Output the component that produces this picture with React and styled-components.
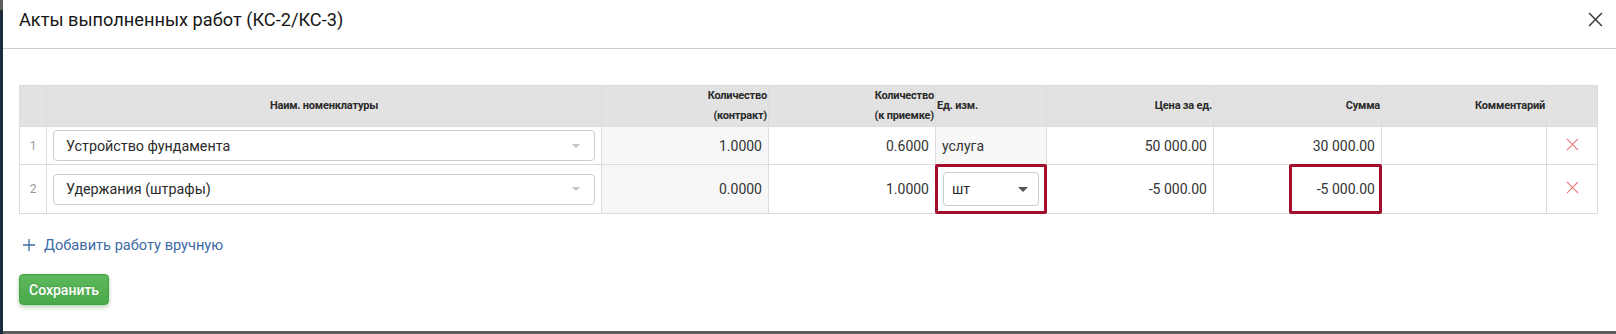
import React from 'react'
import styled, { createGlobalStyle } from 'styled-components'

const GlobalStyle = createGlobalStyle`
  html, body {
    margin: 0;
    padding: 0;
    background: #5d5d5d;
    overflow: hidden;
  }
`

const colors = {
  border: '#dcdcdc',
  headBg: '#e2e2e2',
  text: '#333333',
  readonly: '#f7f7f7',
  highlight: '#a50d2d',
  link: '#3d6aa5',
  remove: '#e37272',
}

const Page = styled.div`
  display: flex;
  width: 1616px;
  height: 334px;
  background: #5d5d5d;
`

const SideStrip = styled.div`
  width: 3px;
  height: 331px;
  margin-top: 10px;
  background: #1d2c3c;
`

const Modal = styled.div`
  flex: 1;
  height: 331px;
  background: #ffffff;
  display: flex;
  flex-direction: column;
  font-family: Roboto, 'Liberation Sans', sans-serif;
  color: ${colors.text};
`

const ModalHeader = styled.div`
  height: 48px;
  display: flex;
  align-items: center;
  justify-content: space-between;
  padding: 0 12px 0 16px;
  border-bottom: 1px solid #cfcfcf;
`

const Title = styled.h2`
  margin: 0;
  font-size: 18.2px;
  font-weight: 400;
  color: #161616;
  padding-bottom: 9px;
`

const CloseBtn = styled.button`
  border: 0;
  background: none;
  padding: 0;
  width: 18px;
  height: 18px;
  margin-bottom: 10px;
  display: flex;
  align-items: center;
  justify-content: center;
  cursor: pointer;
`

const ModalBody = styled.div`
  padding: 36px 16px 0 16px;
  display: flex;
  flex-direction: column;
  align-items: flex-start;
`

const Table = styled.table`
  border-collapse: collapse;
  table-layout: fixed;
  width: 1578px;
  font-size: 14px;
`

const Th = styled.th`
  background: ${colors.headBg};
  border: 1px solid ${colors.border};
  height: 40px;
  padding: 0 1px;
  font-size: 11px;
  font-weight: 700;
  line-height: 20px;
  letter-spacing: -0.2px;
  color: #2a2a2a;
  text-align: ${p => p.$align || 'right'};
  vertical-align: middle;
`

const Tr = styled.tr`
  height: ${p => p.$h}px;
`

const Td = styled.td`
  position: relative;
  border: 1px solid ${colors.border};
  padding: 0 6px;
  background: ${p => (p.$readonly ? colors.readonly : '#ffffff')};
  text-align: ${p => p.$align || 'right'};
  vertical-align: middle;
  white-space: nowrap;
`

const IndexTd = styled(Td)`
  text-align: center;
  padding: 0;
  font-size: 12px;
  color: #9a9a9a;
`

const Select = styled.div`
  display: flex;
  align-items: center;
  justify-content: space-between;
  height: ${p => p.$h || 31}px;
  box-sizing: border-box;
  border: 1px solid #cccccc;
  border-radius: 4px;
  background: #ffffff;
  padding: 0 ${p => p.$pr || 14}px 0 ${p => p.$pl || 12}px;
  font-size: ${p => p.$fs || 14.3}px;
  color: #2b2b2b;
  text-align: left;
`

const Caret = styled.span`
  width: 0;
  height: 0;
  border-left: ${p => p.$size}px solid transparent;
  border-right: ${p => p.$size}px solid transparent;
  border-top: ${p => p.$size}px solid ${p => p.$color};
`

const Highlight = styled.div`
  position: absolute;
  top: -1px;
  bottom: -1px;
  right: -1px;
  width: ${p => (p.$w ? `${p.$w}px` : 'auto')};
  left: ${p => (p.$w ? 'auto' : '-1px')};
  border: 3px solid ${colors.highlight};
  border-radius: 2px;
  pointer-events: none;
`

const UnitWrap = styled.div`
  padding: 0 1px;
`

const AddLink = styled.a`
  display: flex;
  align-items: center;
  gap: 9px;
  margin: 22px 0 0 4px;
  font-size: 14.6px;
  color: ${colors.link};
  text-decoration: none;
  cursor: pointer;
`

const SaveBtn = styled.button`
  margin-top: 20px;
  height: 31px;
  padding: 0 9px;
  border: 1px solid #45a145;
  border-radius: 4px;
  background: linear-gradient(#5cb85c, #4aa94a);
  box-shadow: 0 2px 4px rgba(40, 120, 40, 0.35);
  color: #ffffff;
  font-family: Roboto, 'Liberation Sans', sans-serif;
  font-size: 14px;
  font-weight: 500;
  text-shadow: 0 -1px 0 rgba(0, 0, 0, 0.15);
  cursor: pointer;
`

const CrossIcon = ({ size, color, stroke }) => (
  <svg width={size} height={size} viewBox="0 0 14 14" fill="none">
    <path d="M1 1L13 13M13 1L1 13" stroke={color} strokeWidth={stroke} />
  </svg>
)

const rows = [
  { n: 1, name: 'Устройство фундамента', qc: '1.0000', qa: '0.6000', unit: 'услуга', price: '50 000.00', sum: '30 000.00', h: 38 },
  { n: 2, name: 'Удержания (штрафы)', qc: '0.0000', qa: '1.0000', unit: 'шт', price: '-5 000.00', sum: '-5 000.00', h: 49, edit: true },
]

const App = () => (
  <Page>
    <GlobalStyle />
    <SideStrip />
    <Modal>
      <ModalHeader>
        <Title>Акты выполненных работ (КС-2/КС-3)</Title>
        <CloseBtn aria-label="close">
          <CrossIcon size={15} color="#333" stroke={1.3} />
        </CloseBtn>
      </ModalHeader>
      <ModalBody>
        <Table>
          <colgroup>
            <col style={{ width: 27 }} />
            <col style={{ width: 555 }} />
            <col style={{ width: 167 }} />
            <col style={{ width: 167 }} />
            <col style={{ width: 111 }} />
            <col style={{ width: 167 }} />
            <col style={{ width: 168 }} />
            <col style={{ width: 165 }} />
            <col style={{ width: 51 }} />
          </colgroup>
          <thead>
            <tr>
              <Th />
              <Th $align="center">Наим. номенклатуры</Th>
              <Th>Количество<br />(контракт)</Th>
              <Th>Количество<br />(к приемке)</Th>
              <Th $align="left">Ед. изм.</Th>
              <Th>Цена за ед.</Th>
              <Th>Сумма</Th>
              <Th>Комментарий</Th>
              <Th />
            </tr>
          </thead>
          <tbody>
            {rows.map(r => (
              <Tr key={r.n} $h={r.h}>
                <IndexTd>{r.n}</IndexTd>
                <Td $align="left">
                  <Select>
                    {r.name}
                    <Caret $size={4} $color="#c4c4c4" />
                  </Select>
                </Td>
                <Td $readonly>{r.qc}</Td>
                <Td>{r.qa}</Td>
                {r.edit ? (
                  <Td $align="left">
                    <UnitWrap>
                      <Select $h={34} $pl={8} $pr={10} $fs={14}>
                        {r.unit}
                        <Caret $size={5} $color="#555" />
                      </Select>
                    </UnitWrap>
                    <Highlight />
                  </Td>
                ) : (
                  <Td $align="left" $readonly>{r.unit}</Td>
                )}
                <Td>{r.price}</Td>
                <Td>
                  {r.sum}
                  {r.edit && <Highlight $w={87} />}
                </Td>
                <Td />
                <Td $align="center">
                  <CrossIcon size={13} color={colors.remove} stroke={1.1} />
                </Td>
              </Tr>
            ))}
          </tbody>
        </Table>
        <AddLink>
          <svg width="12" height="12" viewBox="0 0 12 12" fill="none">
            <path d="M6 0V12M0 6H12" stroke={colors.link} strokeWidth="1.3" />
          </svg>
          Добавить работу вручную
        </AddLink>
        <SaveBtn>Сохранить</SaveBtn>
      </ModalBody>
    </Modal>
  </Page>
)

export default App
